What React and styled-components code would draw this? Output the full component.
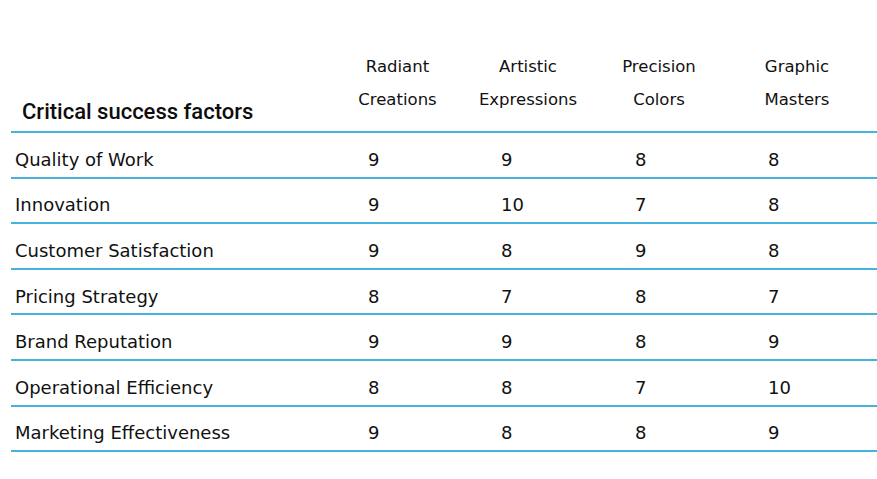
import styled, { createGlobalStyle } from 'styled-components'

const GlobalStyle = createGlobalStyle`
  *, *::before, *::after {
    box-sizing: border-box;
  }
  body {
    margin: 0;
    background: #ffffff;
    font-family: 'DejaVu Sans', 'Open Sans', sans-serif;
    color: #111111;
  }
`

const competitors = [
  { top: 'Radiant', bottom: 'Creations', pad: 20 },
  { top: 'Artistic', bottom: 'Expressions', pad: 20 },
  { top: 'Precision', bottom: 'Colors', pad: 20 },
  { top: 'Graphic', bottom: 'Masters', pad: 8 },
]

const factors = [
  ['Quality of Work', 9, 9, 8, 8],
  ['Innovation', 9, 10, 7, 8],
  ['Customer Satisfaction', 9, 8, 9, 8],
  ['Pricing Strategy', 8, 7, 8, 7],
  ['Brand Reputation', 9, 9, 8, 9],
  ['Operational Efficiency', 8, 8, 7, 10],
  ['Marketing Effectiveness', 9, 8, 8, 9],
]

const offsets = [26, 28, 32, 33]

const App = () => {
  return (
    <>
      <GlobalStyle />
      <Page>
        <HeaderRow>
          <Title>Critical success factors</Title>
          {competitors.map((c) => (
            <HeadCell key={c.top} $pad={c.pad}>
              <span>{c.top}</span>
              <span>{c.bottom}</span>
            </HeadCell>
          ))}
          <span />
        </HeaderRow>
        {factors.map(([label, ...scores]) => (
          <Row key={label}>
            <Label>{label}</Label>
            {scores.map((score, i) => (
              <Score key={i} $offset={offsets[i]}>
                {score}
              </Score>
            ))}
            <span />
          </Row>
        ))}
      </Page>
    </>
  )
}

const Page = styled.div`
  padding: 50px 0 0 11px;
  width: 877px;
`

const columns = `331px 131px 130px 132px 132px 1fr`

const HeaderRow = styled.div`
  display: grid;
  grid-template-columns: ${columns};
  align-items: end;
  border-bottom: 2px solid #45b3de;
`

const Title = styled.div`
  font-family: Roboto, 'Liberation Sans', sans-serif;
  font-size: 22px;
  font-weight: 500;
  color: #0d0d0d;
  padding: 0 0 6px 11px;
  line-height: 26px;
`

const HeadCell = styled.div`
  display: flex;
  flex-direction: column;
  align-items: center;
  padding: 0 ${(p) => p.$pad}px 15px 0;
  font-size: 16.5px;
  line-height: 33px;
  color: #111111;
`

const Row = styled.div`
  display: grid;
  grid-template-columns: ${columns};
  align-items: center;
  height: 45.6px;
  padding-top: 9px;
  border-bottom: 2px solid #45b3de;
`

const Label = styled.div`
  padding-left: 4px;
  font-size: 18px;
`

const Score = styled.div`
  padding-left: ${(p) => p.$offset}px;
  font-size: 18px;
`

export default App
